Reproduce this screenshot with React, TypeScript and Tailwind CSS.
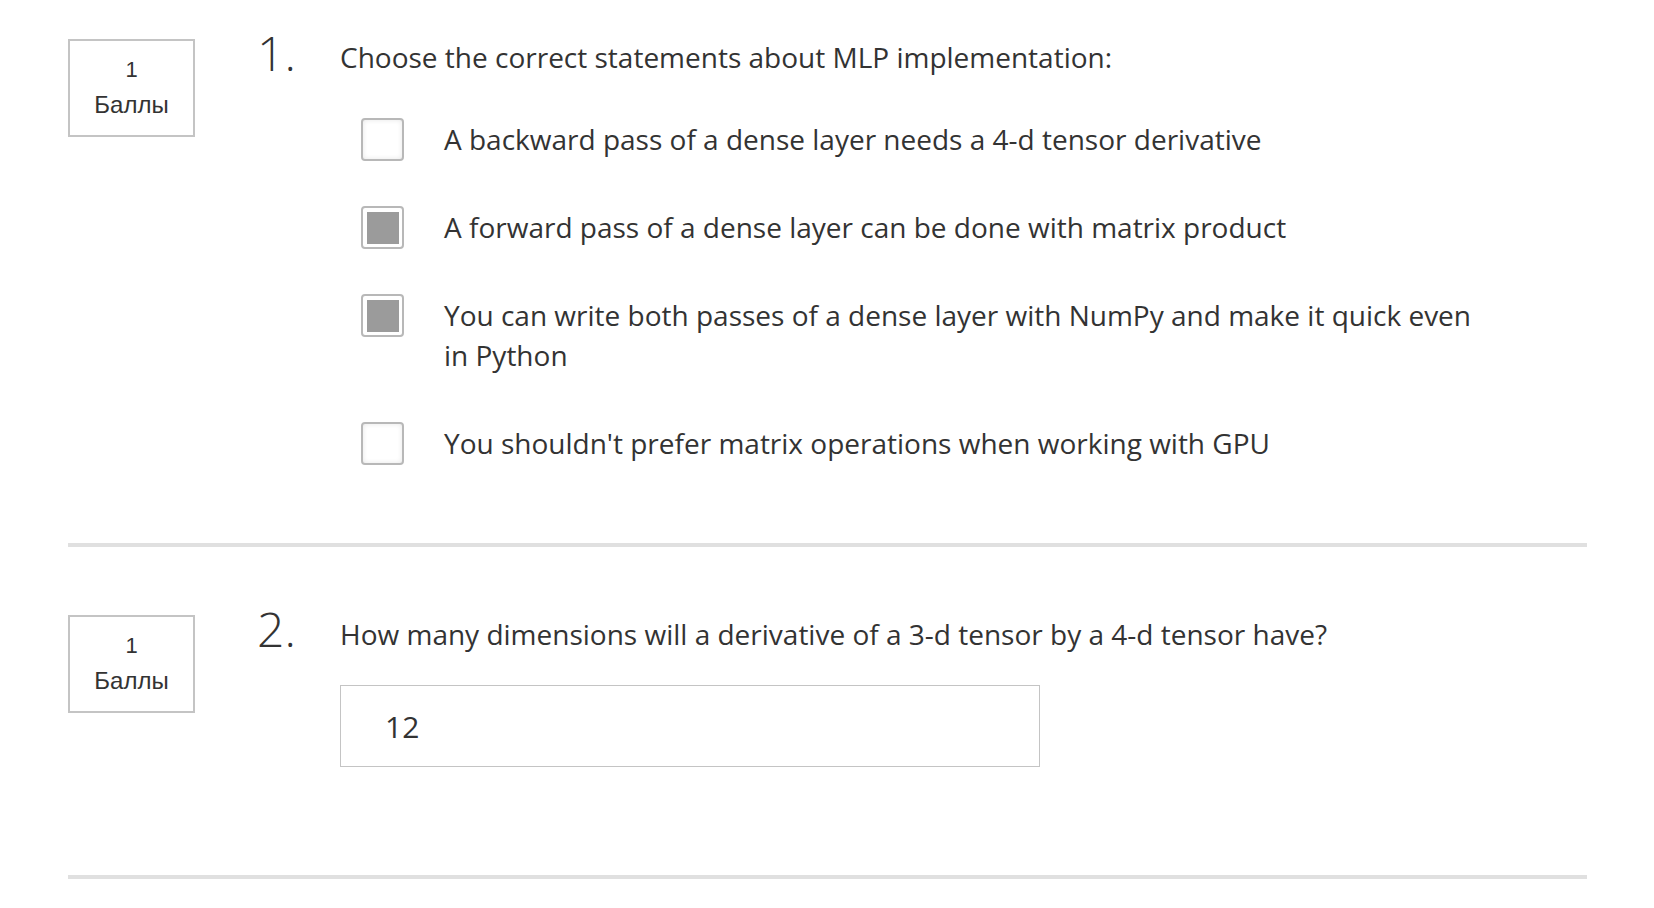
import React from "react";

function Points() {
  return (
    <div className="w-[127px] h-[98px] shrink-0 border-2 border-[#c4c4c4] flex flex-col items-center justify-center text-[#333] font-['Liberation_Sans',Arial,sans-serif]">
      <div className="text-[22px] leading-[33px]">1</div>
      <div className="text-[24px] leading-[36px] mt-[1px]">Баллы</div>
    </div>
  );
}

function Checkbox({ checked }: { checked: boolean }) {
  return (
    <div
      className={
        "w-[43px] h-[43px] shrink-0 rounded-[4px] border-2 border-[#b8b8b8] bg-white flex items-center justify-center " +
        (checked ? "" : "shadow-[inset_0_0_5px_#e6e6e6]")
      }
    >
      {checked && <div className="w-[32px] h-[32px] bg-[#9b9b9b]" />}
    </div>
  );
}

const options: { text: string; checked: boolean }[] = [
  { text: "A backward pass of a dense layer needs a 4-d tensor derivative", checked: false },
  { text: "A forward pass of a dense layer can be done with matrix product", checked: true },
  {
    text: "You can write both passes of a dense layer with NumPy and make it quick even in Python",
    checked: true,
  },
  { text: "You shouldn't prefer matrix operations when working with GPU", checked: false },
];

export default function App() {
  return (
    <div className="min-h-[908px] bg-white pl-[68px] pr-[67px] text-[#333] font-['Open_Sans',sans-serif]">
      <div className="pt-[39px] flex items-start">
        <Points />
        <div className="ml-[62px] w-[83px] shrink-0 -mt-[10px] text-[48px] leading-[48px] font-light">1.</div>
        <div className="flex-1">
          <div className="-mt-[2px] text-[28px] leading-[40px]">Choose the correct statements about MLP implementation:</div>
          <div className="mt-[41px] flex flex-col gap-[45px]">
            {options.map((o, i) => (
              <div key={i} className={"flex items-start " + (i === 2 ? "mb-[2px]" : "")}>
                <div className="ml-[21px]">
                  <Checkbox checked={o.checked} />
                </div>
                <div className="ml-[40px] mt-[1px] w-[1050px] text-[28px] leading-[40px]">{o.text}</div>
              </div>
            ))}
          </div>
        </div>
      </div>
      <div className="mt-[78px] h-[4px] bg-[#e0e0e0]" />
      <div className="pt-[68px] flex items-start">
        <Points />
        <div className="ml-[62px] w-[83px] shrink-0 -mt-[10px] text-[48px] leading-[48px] font-light">2.</div>
        <div className="flex-1">
          <div className="-mt-[1px] text-[28px] leading-[40px]">How many dimensions will a derivative of a 3-d tensor by a 4-d tensor have?</div>
          <div className="mt-[31px] w-[700px] h-[82px] border border-[#c4c4c4] pl-[44px] flex items-center text-[30px]">12</div>
        </div>
      </div>
      <div className="mt-[108px] h-[4px] bg-[#e0e0e0]" />
    </div>
  );
}
